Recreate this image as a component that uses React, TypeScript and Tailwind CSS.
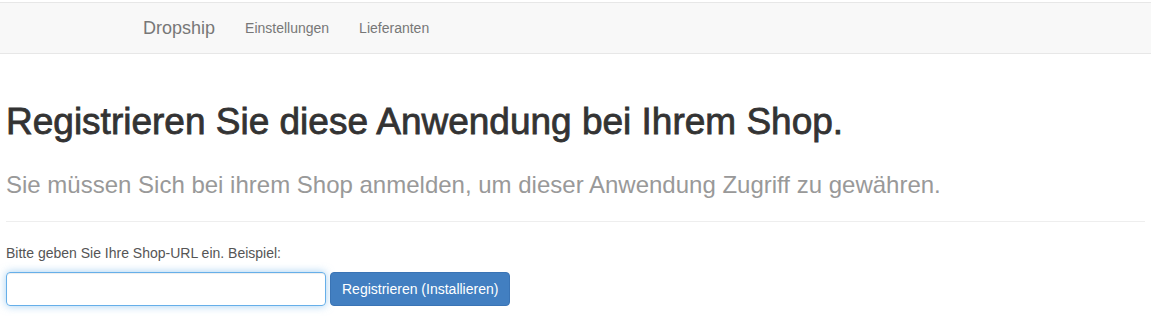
import React from 'react';

const font = { fontFamily: '"Liberation Sans", Arial, sans-serif' };

const App: React.FC = () => {
  return (
    <div className="min-h-[317px] bg-white text-[14px] text-[#333]" style={font}>
      {/* Navigation */}
      <nav className="mt-[2px] h-[52px] border-y border-[#e7e7e7] bg-[#f8f8f8]">
        <div className="flex h-full items-center pl-[128px]">
          <a className="px-[15px] text-[18px] leading-[20px] text-[#777]">Dropship</a>
          <a className="px-[15px] text-[14px] leading-[20px] text-[#777]">Einstellungen</a>
          <a className="px-[15px] text-[14px] leading-[20px] text-[#777]">Lieferanten</a>
        </div>
      </nav>

      <div className="px-[6px]">
        <h1 className="mt-[48px] text-[37px] leading-[40px] text-[#333] [-webkit-text-stroke:0.8px_#333]">
          Registrieren Sie diese Anwendung bei Ihrem Shop.
        </h1>
        <p className="mt-[28px] text-[24px] leading-[30px] text-[#999]">
          Sie müssen Sich bei ihrem Shop anmelden, um dieser Anwendung Zugriff zu gewähren.
        </p>
        <hr className="mt-[21px] border-t border-[#eee]" />

        <form className="mt-[21px]">
          <label className="block text-[14px] leading-[20px] text-[#555]">
            Bitte geben Sie Ihre Shop-URL ein. Beispiel:
          </label>
          <div className="mt-[9px] flex gap-[4px]">
            <input
              type="text"
              className="h-[34px] w-[320px] rounded-[4px] border border-[#66afe9] px-[12px] text-[14px] text-[#555] shadow-[inset_0_1px_1px_rgba(0,0,0,0.075),0_0_8px_rgba(102,175,233,0.6)] outline-none"
            />
            <button
              type="button"
              className="h-[34px] rounded-[4px] border border-[#3a74b5] bg-[#427fc1] px-[11px] text-[14px] text-white"
            >
              Registrieren (Installieren)
            </button>
          </div>
        </form>
      </div>
    </div>
  );
};

export default App;
